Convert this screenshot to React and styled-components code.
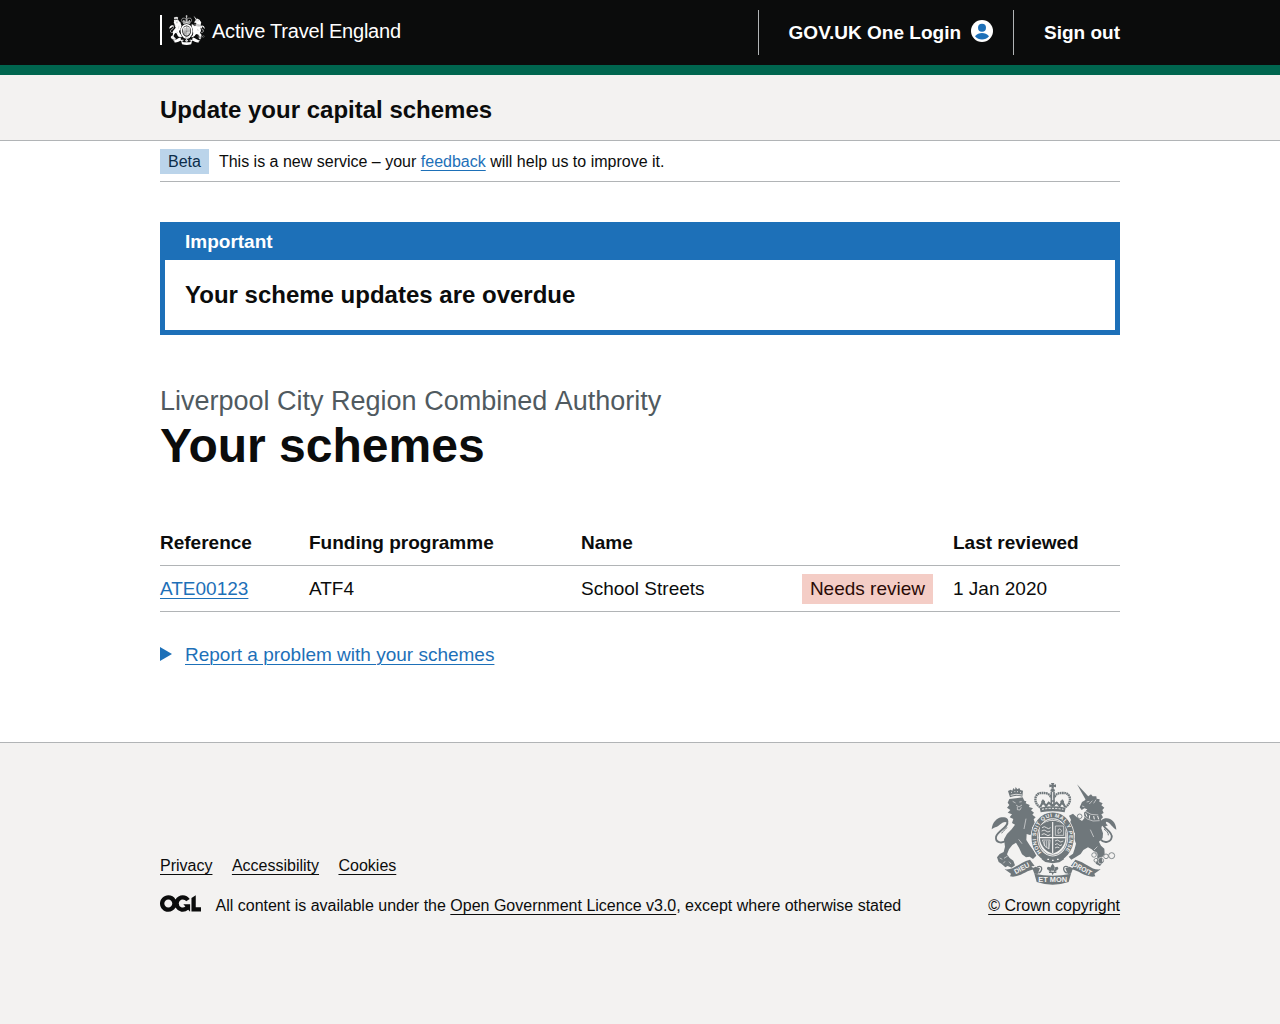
import React from "react";
import styled, { createGlobalStyle, css } from "styled-components";

const GlobalStyle = createGlobalStyle`
  body {
    margin: 0;
    background: #f3f2f1;
    color: #0b0c0c;
    font-family: "Liberation Sans", Arial, sans-serif;
    font-size: 19px;
    line-height: 25px;
  }
`;

const Page = styled.div`
  display: flex;
  flex-direction: column;
  min-height: 1024px;
`;

const Container = styled.div`
  box-sizing: border-box;
  width: 960px;
  margin: 0 auto;
`;

const Header = styled.header`
  background: #0b0c0c;
  border-bottom: 10px solid #00664f;
  color: #fff;
`;

const HeaderRow = styled(Container)`
  display: flex;
  justify-content: space-between;
  height: 65px;
`;

const Brand = styled.a`
  display: flex;
  align-items: center;
  height: 30px;
  margin-top: 15px;
  padding-left: 7px;
  border-left: 2px solid #fff;
  color: #fff;
  text-decoration: none;
`;

const BrandName = styled.span`
  margin-left: 7px;
  padding-top: 1px;
  font-size: 20px;
  line-height: 30px;
  letter-spacing: -0.22px;
  white-space: nowrap;
`;

const AccountNav = styled.nav`
  display: flex;
  height: 45px;
  margin-top: 10px;
  font-weight: 700;
`;

const AccountItem = styled.a`
  display: flex;
  align-items: center;
  border-left: 1px solid #b1b4b6;
  padding-left: ${(p) => p.$inset}px;
  padding-right: ${(p) => p.$end || 0}px;
  color: #fff;
  text-decoration: none;
  white-space: nowrap;

  svg {
    margin: 0 0 3px 10px;
  }
`;

const ServiceBar = styled.section`
  background: #f3f2f1;
  border-bottom: 1px solid #b1b4b6;
`;

const ServiceName = styled.h2`
  margin: 0;
  padding: 20px 0 15px;
  font-size: 24px;
  line-height: 30px;
`;

const Content = styled.div`
  background: #fff;
  height: 601px;
`;

const PhaseBanner = styled.div`
  display: flex;
  align-items: center;
  gap: 10px;
  height: 40px;
  border-bottom: 1px solid #b1b4b6;
  font-size: 16px;
  line-height: 20px;
`;

const Tag = styled.strong`
  display: inline-block;
  padding: ${(p) => (p.$tone === "red" ? "2px 8px 3px" : "3px 8px 2px")};
  font-weight: 400;
  white-space: nowrap;
  background: ${(p) => (p.$tone === "red" ? "#f4cdc6" : "#bbd4ea")};
  color: ${(p) => (p.$tone === "red" ? "#2a0b06" : "#0c2d4a")};
`;

const PhaseText = styled.span`
  padding-top: 1px;
`;

const underline = css`
  text-decoration: underline;
  text-decoration-thickness: 1px;
  text-underline-offset: 0.1578em;
`;

const Link = styled.a`
  color: ${(p) => (p.$plain ? "#0b0c0c" : "#1d70b8")};
  ${underline}
`;

const Banner = styled.section`
  margin-top: 40px;
  border: 5px solid #1d70b8;
`;

const BannerTitle = styled.h2`
  margin: 0;
  padding: 2px 20px 6px;
  height: 25px;
  background: #1d70b8;
  color: #fff;
  font-size: 19px;
  line-height: 25px;
`;

const BannerMessage = styled.p`
  margin: 0;
  padding: 20px;
  font-size: 24px;
  font-weight: 700;
  line-height: 30px;
`;

const Caption = styled.span`
  display: block;
  margin-top: 51px;
  color: #505a5f;
  font-size: 27px;
  line-height: 30px;
`;

const Word = styled.span`
  display: inline-block;
`;

const Title = styled.h1`
  margin: 5px 0 48px;
  font-size: 48px;
  line-height: 50px;
`;

const Table = styled.table`
  width: 100%;
  border-collapse: collapse;
  table-layout: fixed;
`;

const Cell = styled.td`
  box-sizing: border-box;
  height: 46px;
  padding: ${(p) => (p.$right ? 2 : 0)}px 20px 0 0;
  border-bottom: 1px solid #b1b4b6;
  text-align: ${(p) => (p.$right ? "right" : "left")};
  font-weight: 400;
  white-space: nowrap;
`;

const HeadCell = styled(Cell).attrs({ as: "th" })`
  padding-top: 2px;
  font-weight: 700;
`;

const Details = styled.div`
  display: flex;
  align-items: center;
  gap: 13px;
  margin-top: 30px;
`;

const Arrow = styled.span`
  width: 0;
  border-style: solid;
  border-color: transparent transparent transparent #1d70b8;
  border-width: 7px 0 7px 12px;
`;

const Footer = styled.footer`
  flex: 1;
  border-top: 1px solid #b1b4b6;
  background: #f3f2f1;
  font-size: 16px;
  line-height: 20px;
`;

const FooterRow = styled(Container)`
  display: flex;
  justify-content: space-between;
  align-items: flex-end;
  height: 173px;
`;

const FooterLinks = styled.div`
  display: flex;
  gap: 19.45px;
  margin-bottom: 20px;
`;

const Licence = styled.div`
  display: flex;
  align-items: flex-start;

  svg {
    margin: -1px 14.5px 0 0;
  }
`;

const Copyright = styled.div`
  display: flex;
  flex-direction: column;
  align-items: center;
  gap: 11px;
`;

const ARMS_LION =
  "M89 73L129 68L134 78L140 80L138 86L150 91L148 97L160 101L154 107L163 114L158 120L168 128L162 134L166 146L157 159L160 176L151 181L141 178L140 196L150 212L164 231L170 243L160 253L150 246L139 248L127 239L118 219L109 204L98 211L88 224L82 239L90 250L101 258L106 272L96 279L84 274L77 278L65 267L57 262L52 248L60 238L72 232L76 216L73 194L82 178L96 164L106 150L97 145L101 133L90 128L97 119L84 114L92 106L82 99L89 91L84 84Z";
const ARMS_UNICORN =
  "M323 67L334 59L339 65L350 65L351 72L360 74L359 81L369 86L365 92L374 99L368 106L372 115L365 119L370 128L364 134L369 145L365 161L370 176L369 190L358 201L364 213L374 222L375 237L366 250L369 264L361 274L348 267L354 253L350 237L336 224L325 218L311 226L303 238L289 247L275 255L267 246L280 237L285 222L289 207L283 191L286 176L276 167L268 151L274 136L268 123L280 117L294 130L307 139L314 131L313 114L323 104L314 101L306 106L300 98L307 82L316 77Z";

const Arms = ({ width, height, color, paper, lettered }) => (
  <svg width={width} height={height} viewBox="34 22 378 309" preserveAspectRatio="none" aria-hidden="true">
    <g fill={color}>
      <path d={ARMS_LION} />
      <path d={ARMS_UNICORN} />
      <path d="M292 29L327 66L318 75Z" />
      <path d="M36 164C38 142 53 129 66 128C80 127 90 133 84 145C76 138 69 143 60 150C50 159 42 157 36 164Z" />
      <path d="M410 165C409 143 395 131 381 131C368 131 360 139 366 151C372 158 378 156 385 152C379 148 377 143 380 141C393 143 396 158 410 165Z" />
      <path d="M91 68L85 49L93 45L98 48L101 40L106 45L108 37L113 44L119 40L122 46L130 48L128 66Q108 60 91 68Z" />
    </g>
    <g fill="none" stroke={color} strokeWidth="5.5">
      <path d="M83 140C88 159 53 168 49 187C47 203 65 209 80 197" />
      <path d="M369 148C372 162 400 171 396 188C393 203 374 207 363 195" />
      <path d="M82 158C76 167 68 170 66 176M373 163C382 170 386 173 386 182" strokeWidth="3" />
      <g strokeWidth="2.5">
        <circle cx="300" cy="125" r="7" />
        <circle cx="343" cy="241" r="7" />
        <circle cx="349" cy="257" r="6" />
        <circle cx="365" cy="258" r="7" />
        <circle cx="379" cy="245" r="7" />
        <circle cx="396" cy="243" r="9" />
      </g>
    </g>
    <g fill="none" stroke={paper} strokeWidth="1.8">
      <path d="M93 62Q108 56 127 61M94 53h3M104 51h3M112 51h3M121 53h3" strokeWidth="2.5" />
      <path d="M99 80L108 85M119 82L126 81M109 91L118 97L127 91M113 96L113 105L121 106L125 98" />
      <path d="M139 132L133 163M117 194L127 207M84 244L73 251M71 266L76 260M94 268L88 261M60 250L68 254" />
      <path d="M321 82L329 80M307 94L314 96M329 88L338 78M342 86L349 75" />
      <path d="M311 122L323 133L340 139L360 138M316 109L334 119L356 121" />
      <path d="M318 116L322 126M330 122L329 132M342 124L344 134M354 124L357 134" strokeWidth="3" />
      <path d="M332 165L342 187M343 226L353 216" />
      <circle cx="343" cy="241" r="10" />
      <circle cx="365" cy="258" r="10" />
    </g>

    <g fill={color}>
      <path d="M214 25L224 25L222 31L229 29L229 38L222 36L223 42L215 42L216 36L209 38L209 29L216 31Z" />
      <ellipse cx="219" cy="47" rx="7" ry="5" />
      <path d="M180 99Q219 91 258 99L255 113Q219 107 183 113Z" />
    </g>
    <g fill="none" stroke={color}>
      <path d="M181 98C158 82 166 53 187 55C204 54 211 60 214 69M257 98C280 82 272 53 251 55C234 54 227 60 224 69" strokeWidth="7" strokeDasharray="5 1.5" />
      <path d="M215 51L215 95M223 51L223 95" strokeWidth="5" />
      <path d="M182 97L190 80L199 94L207 84L219 93L231 84L240 94L248 80L256 97" strokeWidth="6" />
      <path d="M185 81L196 81M190 75L190 90M214 79L224 79M242 81L253 81M248 75L248 90" strokeWidth="5" />
      <path d="M187 104Q219 98 251 104" stroke={paper} strokeWidth="3" strokeDasharray="6 4" />
    </g>

    <ellipse cx="219" cy="188" rx="66" ry="77" fill={paper} />
    <ellipse cx="219" cy="188" rx="55" ry="66" fill="none" stroke={color} strokeWidth="17" />
    <ellipse cx="219" cy="188" rx="43" ry="54" fill={paper} stroke={color} strokeWidth="2" />
    <path d="M181 154Q219 122 257 154V192C256 215 237 231 219 237C201 231 182 215 181 192Z" fill={color} />
    <g fill="none" stroke={paper} strokeWidth="2.5">
      <path d="M219 142V236M180 189H258" strokeWidth="3.5" />
      <path d="M187 159q7-6 13 0t13 0M186 169q8-6 13 0t13 0M186 180q8-6 13 0t13 0M226 199q8-6 12 0t13 0M226 210q8-6 11 0t10 0M226 220q6-5 13-1" />
      <path d="M227 154H252V182H227ZM235 176V165L241 162L246 169L240 175ZM188 196L211 196L208 223L196 215ZM194 198V214M200 198V219M206 198V222" strokeWidth="2" />
    </g>
    {lettered && (
      <g fill={paper} fontFamily="Liberation Sans, Arial, sans-serif" fontWeight="700" fontSize="16">
        <path id="garter" d="M187 235A50 61 0 1 1 251 235" fill="none" />
        <text>
          <textPath href="#garter" textLength="266" startOffset="2">HONI SOIT QUI MAL Y PENSE</textPath>
        </text>
      </g>
    )}
    <path d="M190 239L204 249L220 252L236 249L248 239L253 254L239 263L219 266L197 262L186 254Z" fill={color} />
    <path d="M203 254h5M217 257h5M232 254h5" stroke={paper} strokeWidth="4" />

    <g fill={color}>
      <path d="M75 284C103 288 119 263 151 255L165 274L155 275L164 284C140 286 120 311 91 305L94 297Z" />
      <path d="M363 284C335 288 319 263 287 255L273 274L283 275L274 284C298 286 318 311 347 305L344 297Z" />
      <path d="M164 297Q219 309 274 297L267 322Q219 338 171 322Z" />
      <path d="M158 281L168 276L181 281L174 298L164 297ZM280 281L270 276L257 281L264 298L274 297Z" />
      <path d="M219 267C225 275 228 279 222 288H216C210 279 213 275 219 267ZM205 276C217 277 214 284 215 291L205 289L210 286C201 286 200 280 205 276ZM233 276C221 277 224 284 223 291L233 289L228 286C237 286 238 280 233 276ZM208 291H230V295H208ZM216 295H222L219 302Z" />
    </g>
    <path d="M172 277C195 268 185 297 176 294M266 277C243 268 253 297 262 294" fill="none" stroke={color} strokeWidth="4" />
    {lettered && (
      <g fill={paper} fontFamily="Liberation Sans, Arial, sans-serif" fontWeight="700" fontSize="21">
        <text transform="translate(108 299) rotate(-29)" textLength="50" lengthAdjust="spacingAndGlyphs">DIEU</text>
        <text x="176" y="322" textLength="86" lengthAdjust="spacingAndGlyphs">ET MON</text>
        <text transform="translate(277 273) rotate(29)" textLength="62" lengthAdjust="spacingAndGlyphs">DROIT</text>
      </g>
    )}
  </svg>
);

const AccountIcon = () => (
  <svg width="22" height="22" viewBox="0 0 22 22" aria-hidden="true">
    <circle cx="11" cy="11" r="11" fill="#fff" />
    <circle cx="11" cy="7.75" r="4" fill="#1d70b8" />
    <path d="M4 16.3C6 13.9 8.3 13 11 13s5 .9 7 3.3C16.1 18.7 13.7 19.5 11 19.5S5.9 18.7 4 16.3Z" fill="#1d70b8" />
  </svg>
);

const OglLogo = () => (
  <svg width="41" height="17" viewBox="0 0 483.2 195.7" aria-hidden="true">
    <path
      fill="#0b0c0c"
      d="M421.5 142.8V.1l-50.7 32.3v161.1h112.4v-50.7zm-122.3-9.6A47.12 47.12 0 0 1 221 97.8c0-26 21.1-47.1 47.1-47.1 16.7 0 31.4 8.7 39.7 21.8l42.7-27.2A97.63 97.63 0 0 0 268.1 0c-36.5 0-68.3 20.1-85.1 49.7A98 98 0 0 0 97.8 0C43.9 0 0 43.9 0 97.8s43.9 97.8 97.8 97.8c36.5 0 68.3-20.1 85.1-49.7a97.76 97.76 0 0 0 149.6 25.4l19.4 22.2h3v-87.8h-80l24.3 27.5zM97.8 145c-26 0-47.1-21.1-47.1-47.1s21.1-47.1 47.1-47.1 47.1 21.1 47.1 47.1S123.8 145 97.8 145"
    />
  </svg>
);

export default function App() {
  return (
    <Page>
      <GlobalStyle />
      <Header>
        <HeaderRow>
          <Brand>
            <Arms width={36} height={30} color="#fff" paper="#0b0c0c" />
            <BrandName>Active Travel England</BrandName>
          </Brand>
          <AccountNav>
            <AccountItem $inset={30} $end={20}>
              GOV.UK One Login
              <AccountIcon />
            </AccountItem>
            <AccountItem $inset={30}>Sign out</AccountItem>
          </AccountNav>
        </HeaderRow>
      </Header>
      <ServiceBar>
        <Container>
          <ServiceName>Update your capital schemes</ServiceName>
        </Container>
      </ServiceBar>
      <Content>
        <Container>
          <PhaseBanner>
            <Tag>Beta</Tag>
            <PhaseText>
              This is a new service – your <Link>feedback</Link> will help us to improve it.
            </PhaseText>
          </PhaseBanner>
          <Banner>
            <BannerTitle>Important</BannerTitle>
            <BannerMessage>Your scheme updates are overdue</BannerMessage>
          </Banner>
          <Caption>
            Liverpool City Region Combined <Word>Authority</Word>
          </Caption>
          <Title>Your schemes</Title>
          <Table>
            <colgroup>
              <col width="149" />
              <col width="272" />
              <col width="202" />
              <col width="170" />
              <col width="167" />
            </colgroup>
            <thead>
              <tr>
                <HeadCell>Reference</HeadCell>
                <HeadCell>Funding programme</HeadCell>
                <HeadCell>Name</HeadCell>
                <HeadCell />
                <HeadCell>Last reviewed</HeadCell>
              </tr>
            </thead>
            <tbody>
              <tr>
                <Cell><Link>ATE00123</Link></Cell>
                <Cell>ATF4</Cell>
                <Cell>School Streets</Cell>
                <Cell $right><Tag $tone="red">Needs review</Tag></Cell>
                <Cell>1 Jan 2020</Cell>
              </tr>
            </tbody>
          </Table>
          <Details>
            <Arrow />
            <Link>Report a problem with your schemes</Link>
          </Details>
        </Container>
      </Content>
      <Footer>
        <FooterRow>
          <div>
            <FooterLinks>
              <Link $plain>Privacy</Link>
              <Link $plain>Accessibility</Link>
              <Link $plain>Cookies</Link>
            </FooterLinks>
            <Licence>
              <OglLogo />
              <span>
                All content is available under the <Link $plain>Open Government Licence v3.0</Link>, except where
                otherwise stated
              </span>
            </Licence>
          </div>
          <Copyright>
            <Arms width={126} height={103} color="#6f777b" paper="#f3f2f1" lettered />
            <Link $plain>© Crown copyright</Link>
          </Copyright>
        </FooterRow>
      </Footer>
    </Page>
  );
}
